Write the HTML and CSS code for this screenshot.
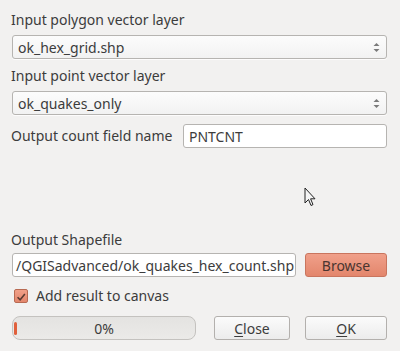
FILE: index.html
```html
<!DOCTYPE html>
<html>
<head>
<meta charset="utf-8">
<link rel="stylesheet" href="styles.css">
</head>
<body>
<div class="dialog">
  <div class="label l1">Input polygon vector layer</div>
  <div class="combo"><span class="val">ok_hex_grid.shp</span><span class="arrows"><svg width="7" height="11" viewBox="0 0 7 11"><path d="M3.5 1 L6.5 4 L0.5 4 Z" fill="#7a7a7a"/><path d="M3.5 10 L6.5 7 L0.5 7 Z" fill="#7a7a7a"/></svg></span></div>
  <div class="label l2">Input point vector layer</div>
  <div class="combo"><span class="val">ok_quakes_only</span><span class="arrows"><svg width="7" height="11" viewBox="0 0 7 11"><path d="M3.5 1 L6.5 4 L0.5 4 Z" fill="#7a7a7a"/><path d="M3.5 10 L6.5 7 L0.5 7 Z" fill="#7a7a7a"/></svg></span></div>
  <div class="row field-row">
    <div class="label inline">Output count field name</div>
    <div class="input grow">PNTCNT</div>
  </div>
  <div class="spacer"></div>
  <div class="label l3">Output Shapefile</div>
  <div class="row path-row">
    <div class="input path"><span>/QGISadvanced/ok_quakes_hex_count.shp</span></div>
    <div class="btn browse">Browse</div>
  </div>
  <div class="check-row">
    <span class="check"><svg width="14" height="14" viewBox="0 0 14 14"><path d="M3 7.2 L6 10.2 L11.5 3.5" fill="none" stroke="#5a3a30" stroke-width="1.8"/></svg></span>
    <span class="check-label">Add result to canvas</span>
  </div>
  <div class="row bottom-row">
    <div class="progress"><span class="chunk"></span><span class="pct">0%</span></div>
    <div class="btn close"><u>C</u>lose</div>
    <div class="btn ok"><u>O</u>K</div>
  </div>
</div>
<svg class="cursor" width="12" height="20" viewBox="0 0 12 20"><path d="M1 1 L1 16 L4.5 12.5 L7 18.5 L9 17.6 L6.6 11.8 L11 11.8 Z" fill="#f4f4f4" stroke="#222" stroke-width="1" stroke-linejoin="round"/></svg>
</body>
</html>
```
FILE: styles.css
```css
html, body {
  margin: 0;
  padding: 0;
  background: #f2f1f0;
  width: 400px;
  height: 351px;
  overflow: hidden;
}
body {
  font-family: "Noto Sans", "DejaVu Sans", sans-serif;
  font-size: 14px;
  color: #3c3c3c;
  position: relative;
}
.dialog {
  display: flex;
  flex-direction: column;
  padding: 0 13px 0 12px;
}
.label {
  line-height: 16px;
}
.l1 { margin-top: 12px; margin-bottom: 7px; margin-left: -1px; }
.l2 { margin-top: 9px; margin-bottom: 7px; margin-left: -1px; }
.l3 { margin-top: 0; margin-bottom: 5px; margin-left: -1px; }
.combo {
  height: 24px;
  box-sizing: border-box;
  border: 1px solid #b6b4b1;
  border-radius: 3px;
  background: linear-gradient(#fcfcfc, #f2f2f2);
  display: flex;
  align-items: center;
  justify-content: space-between;
  padding: 0 6px 0 5px;
  box-shadow: 0 1px 0 rgba(255,255,255,0.8);
}
.arrows { display: flex; align-items: center; }
.row { display: flex; align-items: center; }
.field-row { margin-top: 9px; }
.inline { margin-left: -1px; width: 172px; white-space: nowrap; }
.input {
  height: 24px;
  box-sizing: border-box;
  border: 1px solid #b6b4b1;
  border-radius: 3px;
  background: #ffffff;
  display: flex;
  align-items: center;
  padding: 0 5px;
  white-space: nowrap;
  overflow: hidden;
}
.grow { flex: 1; }
.spacer { height: 84px; }
.path {
  width: 284px;
  padding: 0 1px 0 0;
  justify-content: flex-end;
}
.btn {
  height: 24px;
  box-sizing: border-box;
  border: 1px solid #b3b0ad;
  border-radius: 3px;
  background: linear-gradient(#fbfbfb, #ececec);
  display: flex;
  align-items: center;
  justify-content: center;
  color: #3c3c3c;
}
.browse {
  margin-left: 9px;
  width: 82px;
  background: linear-gradient(#f0a08a, #e3866c);
  border-color: #c9755e;
  color: #4a3530;
}
.check-row {
  display: flex;
  align-items: center;
  margin-top: 10px;
  margin-left: 2px;
}
.check {
  width: 14px;
  height: 14px;
  box-sizing: border-box;
  border: 1px solid #b86a52;
  border-radius: 2px;
  background: linear-gradient(#f1a088, #e3866c);
  display: flex;
}
.check-label { margin-left: 8px; line-height: 18px; }
.bottom-row { margin-top: 11px; }
.progress {
  width: 184px;
  height: 24px;
  box-sizing: border-box;
  border: 1px solid #c4c2bf;
  border-radius: 8px;
  background: linear-gradient(#e4e3e1, #ebeae8);
  position: relative;
  display: flex;
  align-items: center;
  justify-content: center;
}
.chunk {
  position: absolute;
  left: 1px;
  top: 5px;
  width: 3px;
  height: 13px;
  border-radius: 2px;
  background: #e0603c;
}
.close { margin-left: 18px; width: 76px; }
.ok { margin-left: 15px; width: 82px; }
u { text-decoration: underline; text-underline-offset: 2px; }
.cursor {
  position: absolute;
  left: 304px;
  top: 187px;
}
```
